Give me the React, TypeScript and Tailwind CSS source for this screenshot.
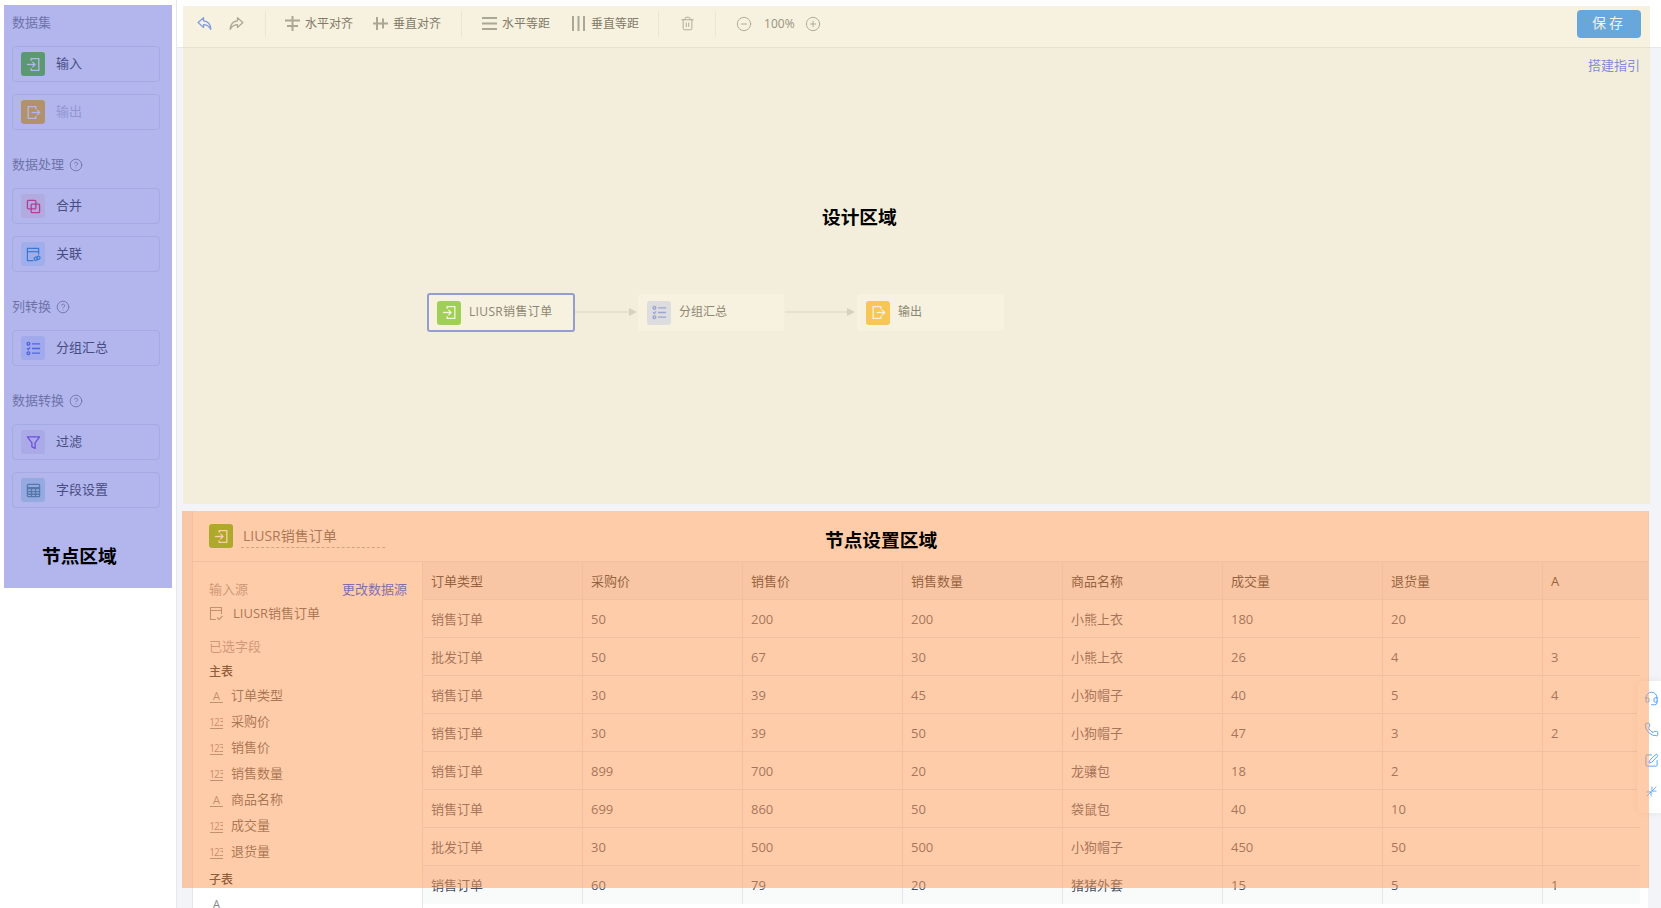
import React from "react";
import { CircleHelp, Trash2, CircleMinus, CirclePlus, ArrowUpRight, ArrowDownLeft, Headset, Phone, SquarePen } from "lucide-react";

const FONT = "font-['Open_Sans','Noto_Sans_CJK_SC',sans-serif]";

const InputIcon = ({ size = 15, color = "#fff" }: { size?: number; color?: string }) => (
  <svg width={size} height={size} viewBox="0 0 16 16" fill="none" stroke={color} strokeWidth="1.4">
    <path d="M5.5 4V1.7h8.2v12.6H5.5V12" />
    <path d="M1 8h8.5" />
    <path d="M6.8 5.2 9.6 8l-2.8 2.8" />
  </svg>
);
const OutputIcon = ({ size = 15, color = "#fff" }: { size?: number; color?: string }) => (
  <svg width={size} height={size} viewBox="0 0 16 16" fill="none" stroke={color} strokeWidth="1.4">
    <path d="M10.5 4.5V1.7H2.3v12.6h8.2v-2.8" />
    <path d="M6 8h8.5" />
    <path d="M11.8 5.2 14.6 8l-2.8 2.8" />
  </svg>
);
const MergeIcon = ({ color }: { color: string }) => (
  <svg width="15" height="15" viewBox="0 0 16 16" fill="none" stroke={color} strokeWidth="1.4">
    <rect x="1.5" y="1.5" width="9" height="9" rx="1" />
    <rect x="5.5" y="5.5" width="9" height="9" rx="1" />
  </svg>
);
const JoinIcon = ({ color }: { color: string }) => (
  <svg width="15" height="15" viewBox="0 0 16 16" fill="none" stroke={color} strokeWidth="1.3">
    <path d="M8 14.5H1.5v-13h12V8" />
    <path d="M1.5 5h12" />
    <circle cx="10.5" cy="12.5" r="1.8" />
    <circle cx="13.2" cy="11.5" r="1.8" />
  </svg>
);
const ListIcon = ({ color, size = 15 }: { color: string; size?: number }) => (
  <svg width={size} height={size} viewBox="0 0 16 16" fill="none" stroke={color} strokeWidth="1.4">
    <circle cx="2.6" cy="3" r="1.5" />
    <path d="M1.2 7.8 2.4 9l2-2.2" />
    <circle cx="2.6" cy="13" r="1.5" />
    <path d="M6.5 3h8.5M6.5 8h8.5M6.5 13h8.5" />
  </svg>
);
const FilterIcon = ({ color }: { color: string }) => (
  <svg width="15" height="15" viewBox="0 0 16 16" fill="none" stroke={color} strokeWidth="1.4" strokeLinejoin="round">
    <path d="M1.5 2h13L9.7 8.3v6L6.3 12.6V8.3z" />
  </svg>
);
const TableIcon = ({ color }: { color: string }) => (
  <svg width="15" height="15" viewBox="0 0 16 16" fill="none" stroke={color} strokeWidth="1.4">
    <rect x="1.5" y="1.5" width="13" height="13" rx="1" />
    <path d="M1.5 5.5h13" strokeWidth="2.4" />
    <path d="M1.5 9.2h13M1.5 12h13M5.8 5.5v9M10.2 5.5v9" />
  </svg>
);
const ReplyIcon = ({ color, flip }: { color: string; flip?: boolean }) => (
  <svg width="15" height="15" viewBox="0 0 16 16" fill="none" stroke={color} strokeWidth="1.3" strokeLinejoin="round" className={flip ? "-scale-x-100" : ""}>
    <path d="M7 1.8 1.2 7 7 12.2V9.2c3.2 0 5.6 1.4 7.8 5 -.4-5-3.4-8.6-7.8-9z" />
  </svg>
);

const AlignIcon = ({ kind }: { kind: "h" | "v" | "hd" | "vd" }) => (
  <svg width="15" height="15" viewBox="0 0 15 15" fill="#909696">
    {kind === "h" && (
      <>
        <rect x="6.5" y="0" width="2" height="15" />
        <rect x="0" y="3.5" width="15" height="2" />
        <rect x="2" y="9" width="11" height="2" />
      </>
    )}
    {kind === "v" && (
      <>
        <rect x="0" y="6.5" width="15" height="2" />
        <rect x="3" y="1" width="2" height="13" />
        <rect x="9" y="2.5" width="2" height="10" />
      </>
    )}
    {kind === "hd" && (
      <>
        <rect x="0" y="1" width="15" height="2" />
        <rect x="0" y="6.5" width="15" height="2" />
        <rect x="0" y="12" width="15" height="2" />
      </>
    )}
    {kind === "vd" && (
      <>
        <rect x="1" y="0" width="2" height="15" />
        <rect x="6.5" y="0" width="2" height="15" />
        <rect x="12" y="0" width="2" height="15" />
      </>
    )}
  </svg>
);

const SideItem = ({ icon, bg, label, disabled }: { icon: React.ReactNode; bg: string; label: string; disabled?: boolean }) => (
  <div className="flex h-[36px] items-center rounded-[4px] border border-[#e4e6ea] pl-[8px]">
    <span className={`flex h-[24px] w-[24px] items-center justify-center rounded-[3px] ${bg}`}>{icon}</span>
    <span className={`ml-[11px] pb-[1px] text-[13px] ${disabled ? "text-[#c0c0c8]" : "text-[#2a2a2a]"}`}>{label}</span>
  </div>
);

const SideTitle = ({ text, help }: { text: string; help?: boolean }) => (
  <div className="flex h-[18px] items-center gap-[5px] text-[13px] text-[#777777]">
    {text}
    {help && <CircleHelp size={14} strokeWidth={1.5} />}
  </div>
);

const ToolBtn = ({ kind, text, className }: { kind: "h" | "v" | "hd" | "vd"; text: string; className: string }) => (
  <span className={`flex items-center gap-[5px] text-[12px] text-[#555555] ${className}`}>
    <AlignIcon kind={kind} />
    {text}
  </span>
);

const Divider = ({ className }: { className: string }) => <span className={`h-[26px] w-px bg-[#eceef0] ${className}`} />;

const Node = ({ className, icon, bg, label, selected }: { className: string; icon: React.ReactNode; bg: string; label: string; selected?: boolean }) => (
  <div
    className={`absolute flex items-center rounded-[3px] bg-white ${className} ${
      selected ? "h-[39px] w-[148px] border-2 border-[#6f88e8] pl-[8px]" : "h-[37px] pl-[9px]"
    }`}
  >
    <span className={`flex h-[24px] w-[24px] items-center justify-center rounded-[3px] ${bg}`}>{icon}</span>
    <span className={`ml-[8px] pb-[2px] text-[12px] text-[#666666] ${selected ? "tracking-[0.35px]" : ""}`}>{label}</span>
  </div>
);

const Connector = ({ className, w }: { className: string; w: number }) => (
  <svg className={`absolute ${className}`} width={w} height="12" viewBox={`0 0 ${w} 12`}>
    <path d={`M0 6H${w - 6}`} stroke="#d8d8d8" strokeWidth="1" />
    <path d={`M${w - 8} 2 L${w} 6 L${w - 8} 10z`} fill="#d0d0d0" />
  </svg>
);

const FieldIcon = ({ t }: { t: "A" | "123" }) => (
  <span className="flex h-[14px] w-[13px] items-end justify-center overflow-hidden border-b border-[#888888] text-[#888888]">
    {t === "A" ? (
      <span className="text-[11px] leading-[12px]">A</span>
    ) : (
      <span className="text-[10px] leading-[12px] tracking-[-0.8px]">123</span>
    )}
  </span>
);

const Field = ({ t, label }: { t: "A" | "123"; label: string }) => (
  <div className="flex h-[26px] items-center gap-[8px] pl-[1px] text-[13px] text-[#555555]">
    <FieldIcon t={t} />
    {label}
  </div>
);

const COLS = ["订单类型", "采购价", "销售价", "销售数量", "商品名称", "成交量", "退货量", "A"];
const ROWS = [
  ["销售订单", "50", "200", "200", "小熊上衣", "180", "20", ""],
  ["批发订单", "50", "67", "30", "小熊上衣", "26", "4", "3"],
  ["销售订单", "30", "39", "45", "小狗帽子", "40", "5", "4"],
  ["销售订单", "30", "39", "50", "小狗帽子", "47", "3", "2"],
  ["销售订单", "899", "700", "20", "龙骧包", "18", "2", ""],
  ["销售订单", "699", "860", "50", "袋鼠包", "40", "10", ""],
  ["批发订单", "30", "500", "500", "小狗帽子", "450", "50", ""],
  ["销售订单", "60", "79", "20", "猪猪外套", "15", "5", "1"],
];

export default function App() {
  return (
    <div className={`relative flex h-[908px] w-full overflow-hidden bg-white ${FONT}`}>
      {/* left sidebar */}
      <aside className="flex h-full w-[177px] shrink-0 flex-col border-r border-[#e6e8ec] pl-[12px] pr-[16px] pt-[14px]">
        <SideTitle text="数据集" />
        <div className="mt-[14px] flex flex-col gap-[12px]">
          <SideItem bg="bg-[#52c208]" icon={<InputIcon color="#ffffff" />} label="输入" />
          <SideItem bg="bg-[#ffb600]" icon={<OutputIcon color="#ffffff" />} label="输出" disabled />
        </div>
        <div className="mt-[26px]">
          <SideTitle text="数据处理" help />
        </div>
        <div className="mt-[14px] flex flex-col gap-[12px]">
          <SideItem bg="bg-[#fde8e4]" icon={<MergeIcon color="#f8105a" />} label="合并" />
          <SideItem bg="bg-[#daf0ff]" icon={<JoinIcon color="#1282cc" />} label="关联" />
        </div>
        <div className="mt-[26px]">
          <SideTitle text="列转换" help />
        </div>
        <div className="mt-[14px]">
          <SideItem bg="bg-[#dae6fe]" icon={<ListIcon color="#3a5ae0" />} label="分组汇总" />
        </div>
        <div className="mt-[26px]">
          <SideTitle text="数据转换" help />
        </div>
        <div className="mt-[14px] flex flex-col gap-[12px]">
          <SideItem bg="bg-[#eee6f4]" icon={<FilterIcon color="#7632e0" />} label="过滤" />
          <SideItem bg="bg-[#c6e6ea]" icon={<TableIcon color="#44827c" />} label="字段设置" />
        </div>
      </aside>

      {/* main */}
      <main className="flex h-full min-w-0 flex-1 flex-col bg-[#f2f4f8]">
        <div className="relative flex h-[48px] shrink-0 items-center border-b border-[#e6e8ec] bg-white">
          <span className="ml-[20px]">
            <ReplyIcon color="#5787ff" />
          </span>
          <span className="ml-[17px]">
            <ReplyIcon color="#909696" flip />
          </span>
          <Divider className="ml-[21px]" />
          <ToolBtn kind="h" text="水平对齐" className="ml-[19px]" />
          <ToolBtn kind="v" text="垂直对齐" className="ml-[20px]" />
          <Divider className="ml-[20px]" />
          <ToolBtn kind="hd" text="水平等距" className="ml-[20px]" />
          <ToolBtn kind="vd" text="垂直等距" className="ml-[21px]" />
          <Divider className="ml-[19px]" />
          <Trash2 size={15} strokeWidth={1.5} color="#909696" className="ml-[21px]" />
          <Divider className="ml-[20px]" />
          <CircleMinus size={16} strokeWidth={1.4} color="#909696" className="ml-[20px]" />
          <span className="ml-[12px] text-[12px] text-[#777777]">100%</span>
          <CirclePlus size={16} strokeWidth={1.4} color="#909696" className="ml-[10px]" />
          <button className="ml-auto mr-[20px] flex h-[28px] w-[64px] items-center justify-center rounded-[4px] bg-[#3296fa] pb-[2px] text-[14px] tracking-[3px] text-white">
            保存
          </button>
        </div>
        <div className="flex h-[456px] shrink-0 pl-[6px] pr-[11px]">
          <div className="relative w-full bg-[#fafafa]">
            <span className="absolute right-[10px] top-[8px] text-[13px] text-[#5a6cff]">搭建指引</span>
            <Node className="left-[244px] top-[245px]" selected bg="bg-[#82cf40]" icon={<InputIcon color="#ffffff" />} label="LIUSR销售订单" />
            <Connector className="left-[392px] top-[258px]" w={62} />
            <Node className="left-[455px] top-[246px] w-[146px]" bg="bg-[#dae3ff]" icon={<ListIcon color="#7b92e5" />} label="分组汇总" />
            <Connector className="left-[602px] top-[258px]" w={70} />
            <Node className="left-[674px] top-[246px] w-[147px]" bg="bg-[#ffc23c]" icon={<OutputIcon color="#ffffff" />} label="输出" />
          </div>
        </div>
        <div className="ml-[15px] mr-[13px] mt-[7px] flex min-h-0 flex-1 flex-col rounded-tl-[4px] border-l border-[#e4e6ea] bg-white">
          <div className="flex h-[51px] shrink-0 items-center border-b border-[#e4e6ea] pl-[16px]">
            <span className="flex h-[24px] w-[24px] items-center justify-center rounded-[3px] bg-[#5ab800]">
              <InputIcon color="#ffffff" />
            </span>
            <span className="ml-[8px] flex h-[24px] w-[144px] items-center border-b border-dashed border-[#aaaaaa] pl-[2px] text-[14px] text-[#555555]">
              LIUSR销售订单
            </span>
          </div>
          <div className="flex min-h-0 flex-1">
            <div className="w-[230px] shrink-0 border-r border-[#e4e6ea] pl-[16px] pr-[15px] pt-[18px]">
              <div className="flex items-center justify-between text-[13px] leading-[18px]">
                <span className="text-[#999999]">输入源</span>
                <span className="text-[#0043ff]">更改数据源</span>
              </div>
              <div className="mt-[6px] flex items-center gap-[9px] text-[13px] leading-[18px] text-[#555555]">
                <svg width="15" height="15" viewBox="0 0 15 15" fill="none" stroke="#888888" strokeWidth="1.1">
                  <path d="M7 13.5H1.5v-12h11V8M1.5 4.5h11" />
                  <path d="M8 11.5l2 2 3.5-3.5" />
                </svg>
                LIUSR销售订单
              </div>
              <div className="mt-[15px] text-[13px] leading-[18px] text-[#999999]">已选字段</div>
              <div className="mt-[8px] text-[12px] font-medium leading-[18px] text-[#222222]">主表</div>
              <div className="mt-[2px]">
                <Field t="A" label="订单类型" />
                <Field t="123" label="采购价" />
                <Field t="123" label="销售价" />
                <Field t="123" label="销售数量" />
                <Field t="A" label="商品名称" />
                <Field t="123" label="成交量" />
                <Field t="123" label="退货量" />
              </div>
              <div className="mt-[6px] text-[12px] font-medium leading-[18px] text-[#222222]">子表</div>
              <div className="mt-[8px] pl-[1px]">
                <FieldIcon t="A" />
              </div>
            </div>
            <div className="min-w-0 flex-1">
              <div className="grid h-[38px] grid-cols-[repeat(7,160px)_1fr] border-b border-[#e4e6ea] bg-[#f0f1f4]">
                {COLS.map((c, i) => (
                  <div key={i} className="flex items-center border-r border-[#e4e6ea] px-[8px] pt-[2px] text-[13px] text-[#2a2a2a] last:border-r-0">
                    {c}
                  </div>
                ))}
              </div>
              <div className="mr-[8px]">
                {ROWS.map((r, i) => (
                  <div
                    key={i}
                    className={`grid h-[38px] grid-cols-[repeat(7,160px)_1fr] ${i < 7 ? "border-b border-[#e4e6ea] bg-white" : "bg-[#f9fbfb]"}`}
                  >
                    {r.map((c, j) => (
                      <div key={j} className="flex items-center border-r border-[#e4e6ea] px-[8px] pt-[2px] text-[13px] text-[#4b5060] last:border-r-0">
                        {c}
                      </div>
                    ))}
                  </div>
                ))}
              </div>
            </div>
          </div>
        </div>
      </main>

      {/* floating tool strip */}
      <div className="absolute right-0 top-[681px] flex h-[132px] w-[24px] flex-col items-start gap-[16px] rounded-l-[6px] bg-white pl-[7px] pt-[10px] shadow-[0_0_8px_rgba(0,0,0,0.08)]">
        <Headset size={15} strokeWidth={1.5} color="#4f9fff" />
        <Phone size={15} strokeWidth={1.5} color="#4f9fff" />
        <SquarePen size={15} strokeWidth={1.5} color="#4f9fff" />
        <span className="relative block h-[15px] w-[15px]">
          <ArrowDownLeft size={10} strokeWidth={2} color="#4f9fff" className="absolute right-0 top-0" />
          <ArrowUpRight size={10} strokeWidth={2} color="#4f9fff" className="absolute bottom-0 left-0" />
        </span>
      </div>

      {/* annotation overlays */}
      <div className="absolute left-[4px] top-[5px] h-[583px] w-[168px] bg-[#666ed9]/50">
        <span className="absolute left-[38px] top-[539px] text-[18.7px] font-bold leading-[24px] text-black">节点区域</span>
      </div>
      <div className="absolute left-[183px] top-[6px] h-[498px] w-[1467px] bg-[#e6d296]/30">
        <span className="absolute left-[639px] top-[199px] text-[18.7px] font-bold leading-[24px] text-black">设计区域</span>
      </div>
      <div className="absolute left-[182px] top-[511px] h-[377px] w-[1467px] bg-[#ff9955]/50">
        <span className="absolute left-[643px] top-[17px] text-[18.7px] font-bold leading-[24px] text-black">节点设置区域</span>
      </div>
    </div>
  );
}
